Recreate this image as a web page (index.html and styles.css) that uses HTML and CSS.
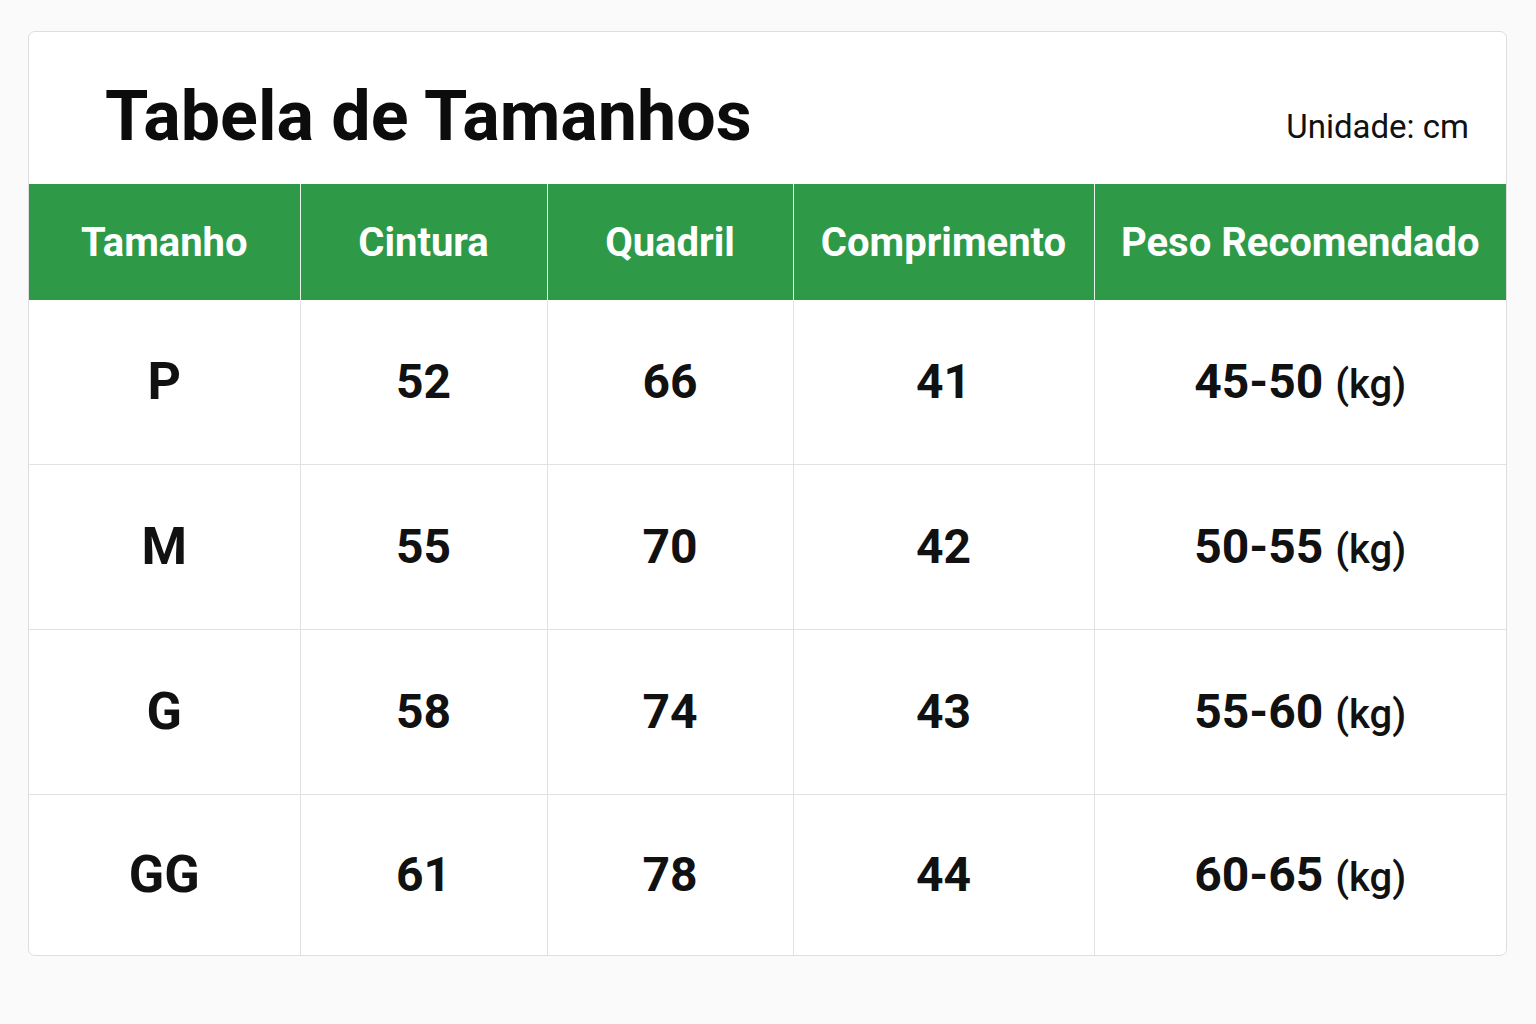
FILE: index.html
```html
<!DOCTYPE html>
<html lang="pt">
<head>
<meta charset="utf-8">
<title>Tabela de Tamanhos</title>
<link rel="stylesheet" href="styles.css">
</head>
<body>
<div class="card">
  <div class="card-head">
    <h1 class="title">Tabela de Tamanhos</h1>
    <span class="unit">Unidade: cm</span>
  </div>
  <table class="sizes">
    <colgroup>
      <col class="c1"><col class="c2"><col class="c3"><col class="c4"><col class="c5">
    </colgroup>
    <thead>
      <tr>
        <th>Tamanho</th><th>Cintura</th><th>Quadril</th><th>Comprimento</th><th>Peso Recomendado</th>
      </tr>
    </thead>
    <tbody>
      <tr><td class="size">P</td><td>52</td><td>66</td><td>41</td><td>45-50 <span class="kg">(kg)</span></td></tr>
      <tr><td class="size">M</td><td>55</td><td>70</td><td>42</td><td>50-55 <span class="kg">(kg)</span></td></tr>
      <tr><td class="size">G</td><td>58</td><td>74</td><td>43</td><td>55-60 <span class="kg">(kg)</span></td></tr>
      <tr><td class="size">GG</td><td>61</td><td>78</td><td>44</td><td>60-65 <span class="kg">(kg)</span></td></tr>
    </tbody>
  </table>
</div>
</body>
</html>
```
FILE: styles.css
```css
html, body {
  margin: 0;
  padding: 0;
  background: #fafafa;
}
body {
  padding: 31px 29px 0 28px;
  font-family: Roboto, "Liberation Sans", Arial, sans-serif;
  color: #111;
}
.card {
  background: #fff;
  border: 1px solid #dedede;
  border-radius: 7px;
  overflow: hidden;
}
.card-head {
  height: 152px;
  display: flex;
  align-items: flex-end;
  justify-content: space-between;
  padding: 0 37px 0 76px;
  box-sizing: border-box;
}
.title {
  margin: 0 0 33px 0;
  font-size: 70px;
  font-weight: 700;
  line-height: 1;
  color: #0c0c0c;
}
.unit {
  font-size: 33px;
  margin-bottom: 38px;
  color: #111;
}
.sizes {
  width: 100%;
  border-collapse: collapse;
  table-layout: fixed;
}
.c1 { width: 271px; }
.c2 { width: 247px; }
.c3 { width: 246px; }
.c4 { width: 301px; }
.c5 { width: auto; }
.sizes th {
  background: #2e9a48;
  color: #fff;
  height: 116px;
  font-size: 40px;
  font-weight: 700;
  padding: 0;
  border-left: 1px solid #e8f3ea;
  text-align: center;
}
.sizes th:first-child { border-left: none; }
.sizes td {
  height: 162px;
  padding: 0 0 2px 0;
  text-align: center;
  font-size: 48px;
  font-weight: 700;
  color: #111;
  border-left: 1px solid #e2e2e2;
  border-top: 1px solid #e2e2e2;
}
.sizes td:first-child { border-left: none; }
.sizes tbody tr:first-child td { border-top: none; }
.sizes tbody tr:last-child td { height: 158px; }
.sizes td.size { font-size: 52px; }
.kg {
  font-size: 40px;
  font-weight: 500;
}
```
